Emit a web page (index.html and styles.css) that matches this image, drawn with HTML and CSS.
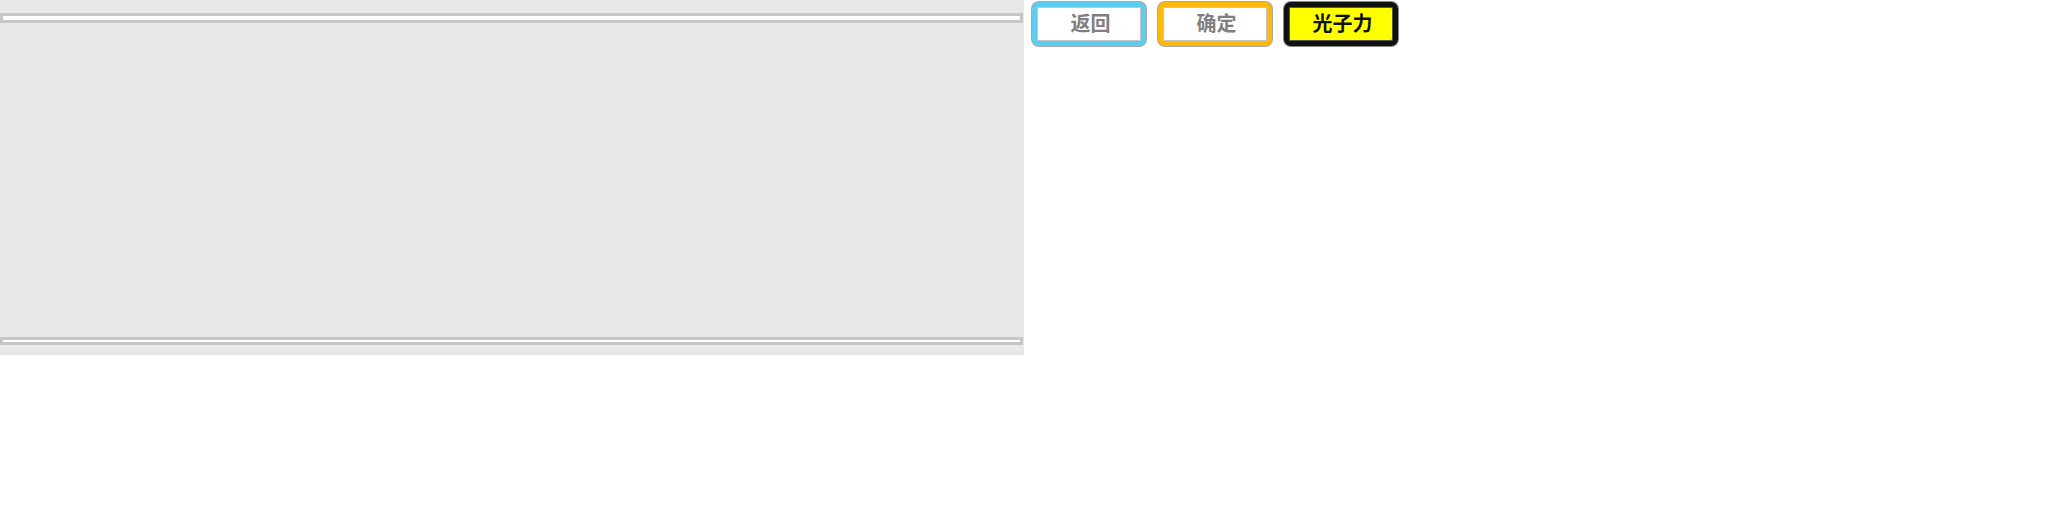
FILE: index.html
```html
<!DOCTYPE html>
<html>
<head>
<meta charset="utf-8">
<link rel="stylesheet" href="styles.css">
</head>
<body>
<div class="page">
  <div class="panel">
    <div class="bar bar-top"></div>
    <div class="spacer"></div>
    <div class="bar bar-bottom"></div>
  </div>
  <div class="buttons">
    <div class="btn btn-blue">返回</div>
    <div class="btn btn-orange">确定</div>
    <div class="btn btn-yellow">光子力</div>
  </div>
</div>
</body>
</html>
```
FILE: styles.css
```css
html, body {
  margin: 0;
  padding: 0;
  background: #ffffff;
}
.page {
  display: flex;
  align-items: flex-start;
}
.panel {
  width: 1024px;
  height: 355px;
  background: #e8e8e8;
  display: flex;
  flex-direction: column;
  padding-top: 13px;
  padding-bottom: 10px;
  box-sizing: border-box;
}
.spacer {
  flex: 1;
}
.bar {
  width: 1023px;
  box-sizing: border-box;
  border: 3px solid #c6c6c6;
  background: #ffffff;
}
.bar-top {
  height: 10px;
}
.bar-bottom {
  height: 8px;
}
.buttons {
  display: flex;
  gap: 12px;
  padding-left: 8px;
  padding-top: 2px;
}
.btn {
  width: 114px;
  height: 44px;
  box-sizing: border-box;
  border: 5px solid #5ccef0;
  border-radius: 7px;
  box-shadow: 0 0 0 1px #a8a8a8, inset 0 0 0 1px #c4c4c4;
  background: #ffffff;
  display: flex;
  align-items: center;
  justify-content: center;
  font-family: "Noto Sans CJK SC", "Noto Sans", sans-serif;
  font-weight: bold;
  font-size: 20px;
  line-height: 1;
  color: #808080;
  padding-left: 3px;
  padding-bottom: 3px;
}
.btn-orange {
  border-color: #ffb90a;
}
.btn-yellow {
  border-color: #111111;
  background: #ffff00;
  color: #111111;
  box-shadow: 0 0 0 1px #888888, inset 0 0 0 1px #555555;
}
```
